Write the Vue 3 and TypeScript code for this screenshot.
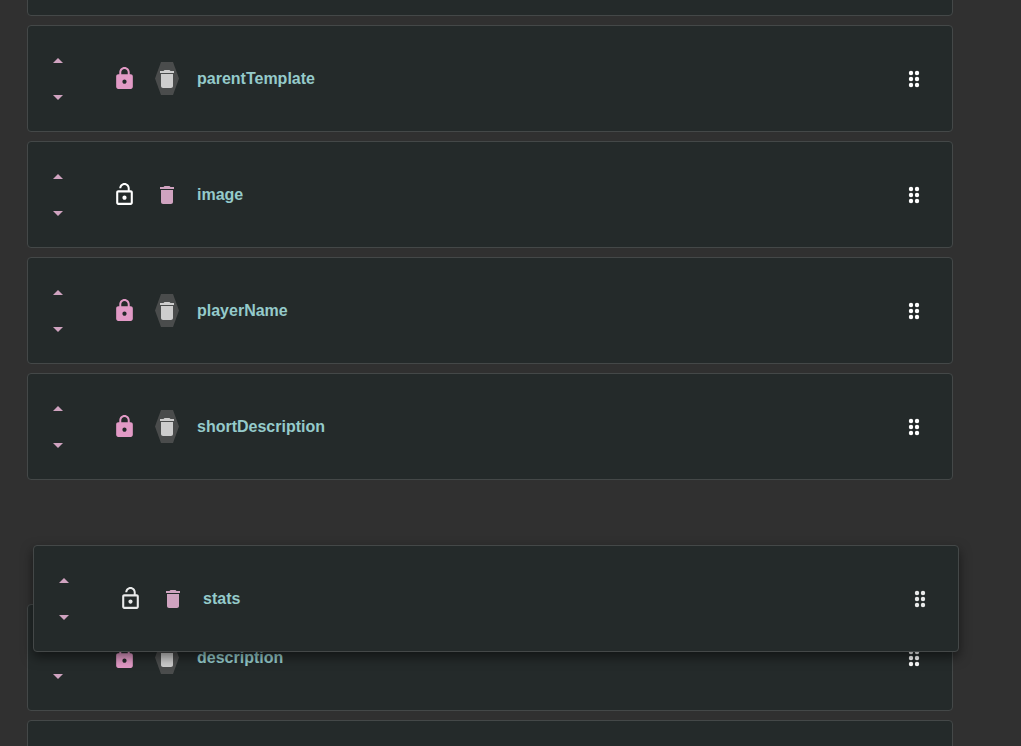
<script setup lang="ts">
interface Field {
  id: number
  name?: string
  locked?: boolean
  placeholder?: boolean
  dragging?: boolean
}

const fields: Field[] = [
  { id: 1 },
  { id: 2, name: 'parentTemplate', locked: true },
  { id: 3, name: 'image', locked: false },
  { id: 4, name: 'playerName', locked: true },
  { id: 5, name: 'shortDescription', locked: true },
  { id: 6, placeholder: true },
  { id: 7, name: 'description', locked: true },
  { id: 8 },
  { id: 9, name: 'stats', locked: false, dragging: true },
]
</script>

<template>
  <main class="page">
    <ul class="list">
      <li
        v-for="field in fields"
        :key="field.id"
        :class="{ card: !field.placeholder, slot: field.placeholder, dragging: field.dragging }"
      >
        <template v-if="field.name">
          <div class="order">
            <button type="button" class="step" :aria-label="`Move ${field.name} up`">
              <svg viewBox="0 0 24 24"><path d="M7 14l5-5 5 5z" /></svg>
            </button>
            <button type="button" class="step" :aria-label="`Move ${field.name} down`">
              <svg viewBox="0 0 24 24"><path d="M7 10l5 5 5-5z" /></svg>
            </button>
          </div>
          <button
            type="button"
            class="lock"
            :class="{ locked: field.locked }"
            :aria-label="field.locked ? `Unlock ${field.name}` : `Lock ${field.name}`"
          >
            <svg v-if="field.locked" viewBox="0 0 24 24">
              <path
                d="M18 8h-1V6c0-2.76-2.24-5-5-5S7 3.24 7 6v2H6c-1.1 0-2 .9-2 2v10c0 1.1.9 2 2 2h12c1.1 0 2-.9 2-2V10c0-1.1-.9-2-2-2zm-6 9c-1.1 0-2-.9-2-2s.9-2 2-2 2 .9 2 2-.9 2-2 2zm3.1-9H8.9V6c0-1.71 1.39-3.1 3.1-3.1 1.71 0 3.1 1.39 3.1 3.1v2z"
              />
            </svg>
            <svg v-else viewBox="0 0 24 24">
              <path
                d="M12 17c1.1 0 2-.9 2-2s-.9-2-2-2-2 .9-2 2 .9 2 2 2zm6-9h-1V6c0-2.76-2.24-5-5-5S7 3.24 7 6h1.9c0-1.71 1.39-3.1 3.1-3.1 1.71 0 3.1 1.39 3.1 3.1v2H6c-1.1 0-2 .9-2 2v10c0 1.1.9 2 2 2h12c1.1 0 2-.9 2-2V10c0-1.1-.9-2-2-2zm0 12H6V10h12v10z"
              />
            </svg>
          </button>
          <button
            type="button"
            class="trash"
            :disabled="field.locked"
            :aria-label="`Delete ${field.name}`"
          >
            <svg viewBox="0 0 24 24">
              <path
                d="M6 19c0 1.1.9 2 2 2h8c1.1 0 2-.9 2-2V7H6v12zM19 4h-3.5l-1-1h-5l-1 1H5v2h14V4z"
              />
            </svg>
          </button>
          <span class="name">{{ field.name }}</span>
          <button type="button" class="grip" :aria-label="`Drag ${field.name}`">
            <svg viewBox="0 0 24 24">
              <circle cx="9" cy="6" r="2.2" />
              <circle cx="15" cy="6" r="2.2" />
              <circle cx="9" cy="12" r="2.2" />
              <circle cx="15" cy="12" r="2.2" />
              <circle cx="9" cy="18" r="2.2" />
              <circle cx="15" cy="18" r="2.2" />
            </svg>
          </button>
        </template>
      </li>
    </ul>
  </main>
</template>

<style>
body {
  margin: 0;
  background: #303030;
}
</style>

<style scoped>
.page {
  position: relative;
  height: 100vh;
  overflow: hidden;
  font-family: 'Liberation Sans', Arial, sans-serif;
}

/* The list is scrolled, so its first card is cut by the top edge. */
.list {
  display: flex;
  flex-direction: column;
  gap: 9px;
  margin: -91px 68px 0 27px;
  padding: 0;
  list-style: none;
}

.card {
  box-sizing: border-box;
  display: flex;
  align-items: center;
  flex-shrink: 0;
  height: 107px;
  padding: 0 26px 0 12px;
  border: 1px solid #444848;
  border-radius: 4px;
  background: #242a2a;
}

.slot {
  flex-shrink: 0;
  height: 106px;
}

.dragging {
  position: absolute;
  top: 545px;
  left: 33px;
  right: 62px;
  z-index: 2;
  box-shadow: 0 5px 12px rgba(0, 0, 0, 0.5);
}

.dragging .lock,
.dragging .grip {
  opacity: 0.9;
}

button {
  display: flex;
  align-items: center;
  justify-content: center;
  flex-shrink: 0;
  padding: 0;
  border: 0;
  background: none;
  color: #d0a3c0;
  cursor: pointer;
}

svg {
  display: block;
  width: 24px;
  height: 24px;
  fill: currentColor;
}

.order {
  display: flex;
  flex-direction: column;
}

.step {
  width: 36px;
  height: 36px;
}

.lock {
  width: 25px;
  height: 33px;
  margin-left: 36px;
  color: #fff;
}

.lock svg {
  width: 25px;
  height: 25px;
}

.locked {
  color: #e29ac6;
}

.trash {
  width: 24px;
  height: 33px;
  margin-left: 18px;
}

.trash:disabled {
  background: #4a4c4c;
  color: #cdcdcd;
  clip-path: polygon(25% 0, 75% 0, 100% 50%, 75% 100%, 25% 100%, 0 50%);
  cursor: default;
}

.name {
  flex: 1;
  margin-left: 18px;
  color: #95cbcb;
  font-size: 16px;
  font-weight: 700;
  line-height: 24px;
}

.grip {
  color: #fff;
  cursor: grab;
}
</style>
